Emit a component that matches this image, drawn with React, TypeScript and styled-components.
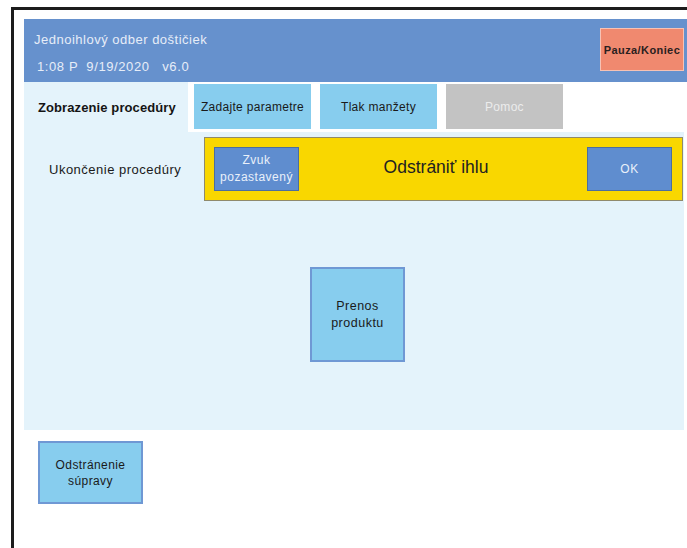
import React from "react";
import styled, { createGlobalStyle } from "styled-components";

const Global = createGlobalStyle`
  html, body { margin: 0; padding: 0; background: #ffffff; }
  body { font-family: "Liberation Sans", Arial, sans-serif; overflow: hidden; }
`;

const Frame = styled.div`
  margin: 7px 0 0 11px;
  height: 541px;
  box-sizing: border-box;
  border-top: 3px solid #1c1c1c;
  border-left: 3px solid #1c1c1c;
  padding: 9px 0 0 10px;
`;

const Screen = styled.div`
  width: 663px;
  display: flex;
  flex-direction: column;
`;

const Header = styled.header`
  height: 63px;
  background: #6691cd;
  display: flex;
  justify-content: space-between;
  align-items: flex-start;
`;

const HeaderText = styled.div`
  display: flex;
  flex-direction: column;
  padding: 13px 0 0 10px;
  color: #e6edf8;
  font-size: 13px;
  letter-spacing: 0.5px;
`;

const Title = styled.div`
  line-height: 16px;
`;

const Status = styled.div`
  line-height: 16px;
  margin-top: 11px;
  padding-left: 3px;
  white-space: pre;
  letter-spacing: 0.6px;
`;

const PauseButton = styled.button`
  margin: 9px 3px 0 0;
  width: 84px;
  height: 43px;
  background: #f0896f;
  border: 1px solid #f7c2b4;
  color: #2a2020;
  font-family: inherit;
  font-weight: bold;
  font-size: 11px;
  letter-spacing: 0.4px;
  padding: 0;
`;

const TabRow = styled.div`
  height: 50px;
  display: flex;
  align-items: flex-start;
`;

const ActiveTab = styled.div`
  width: 164px;
  height: 50px;
  background: #e4f3fb;
  font-weight: bold;
  font-size: 13px;
  letter-spacing: 0.1px;
  color: #141414;
  display: flex;
  align-items: center;
  padding-left: 14px;
  box-sizing: border-box;
  margin-right: 6px;
`;

const Tab = styled.div<{ $disabled?: boolean }>`
  width: 117px;
  height: 45px;
  margin-top: 2px;
  margin-right: 9px;
  background: ${(p) => (p.$disabled ? "#c3c3c3" : "#87cdee")};
  color: ${(p) => (p.$disabled ? "#ececec" : "#1a1a1a")};
  font-size: 12px;
  letter-spacing: 0.3px;
  display: flex;
  align-items: center;
  justify-content: center;
`;

const Content = styled.main`
  width: 660px;
  height: 298px;
  background: #e4f3fb;
  display: flex;
  flex-direction: column;
`;

const StepRow = styled.div`
  display: flex;
  align-items: flex-start;
  margin-top: 5px;
`;

const StepLabel = styled.div`
  width: 180px;
  height: 64px;
  display: flex;
  align-items: center;
  padding-left: 25px;
  box-sizing: border-box;
  font-size: 13px;
  letter-spacing: 0.5px;
  color: #1a1a1a;
`;

const AlertBox = styled.div`
  width: 479px;
  height: 64px;
  box-sizing: border-box;
  background: #f9d700;
  border: 1px solid #8f8a6c;
  display: flex;
  align-items: center;
  justify-content: space-between;
  padding: 0 10px 0 9px;
`;

const AlertButton = styled.button`
  width: 85px;
  height: 44px;
  background: #5f8dcf;
  border: 1px solid #4c6e9e;
  color: #e9f0fa;
  font-family: inherit;
  font-size: 12px;
  letter-spacing: 0.5px;
  line-height: 17px;
  padding: 0;
`;

const AlertText = styled.div`
  font-size: 17.5px;
  color: #222;
  margin: -4px 14px 0 0;
`;

const Tile = styled.button<{ $w: number; $h: number }>`
  width: ${(p) => p.$w}px;
  height: ${(p) => p.$h}px;
  background: #87cdee;
  border: 2px solid #6f98d4;
  color: #1a1a1a;
  font-family: inherit;
  font-size: 12px;
  letter-spacing: 0.4px;
  line-height: 16px;
  padding: 0;
`;

const CenterTile = styled.div`
  margin: 66px 0 0 286px;
  & > button {
    font-size: 12.5px;
    letter-spacing: 0.5px;
    line-height: 17px;
  }
`;

const Footer = styled.div`
  padding: 11px 0 0 14px;
`;

export default function App() {
  return (
    <>
      <Global />
      <Frame>
        <Screen>
          <Header>
            <HeaderText>
              <Title>Jednoihlový odber doštičiek</Title>
              <Status>{"1:08 P  9/19/2020   v6.0"}</Status>
            </HeaderText>
            <PauseButton>Pauza/Koniec</PauseButton>
          </Header>
          <TabRow>
            <ActiveTab>Zobrazenie procedúry</ActiveTab>
            <Tab>Zadajte parametre</Tab>
            <Tab>Tlak manžety</Tab>
            <Tab $disabled>Pomoc</Tab>
          </TabRow>
          <Content>
            <StepRow>
              <StepLabel>Ukončenie procedúry</StepLabel>
              <AlertBox>
                <AlertButton>
                  Zvuk
                  <br />
                  pozastavený
                </AlertButton>
                <AlertText>Odstrániť ihlu</AlertText>
                <AlertButton>OK</AlertButton>
              </AlertBox>
            </StepRow>
            <CenterTile>
              <Tile $w={95} $h={95}>
                Prenos
                <br />
                produktu
              </Tile>
            </CenterTile>
          </Content>
          <Footer>
            <Tile $w={105} $h={63}>
              Odstránenie
              <br />
              súpravy
            </Tile>
          </Footer>
        </Screen>
      </Frame>
    </>
  );
}
